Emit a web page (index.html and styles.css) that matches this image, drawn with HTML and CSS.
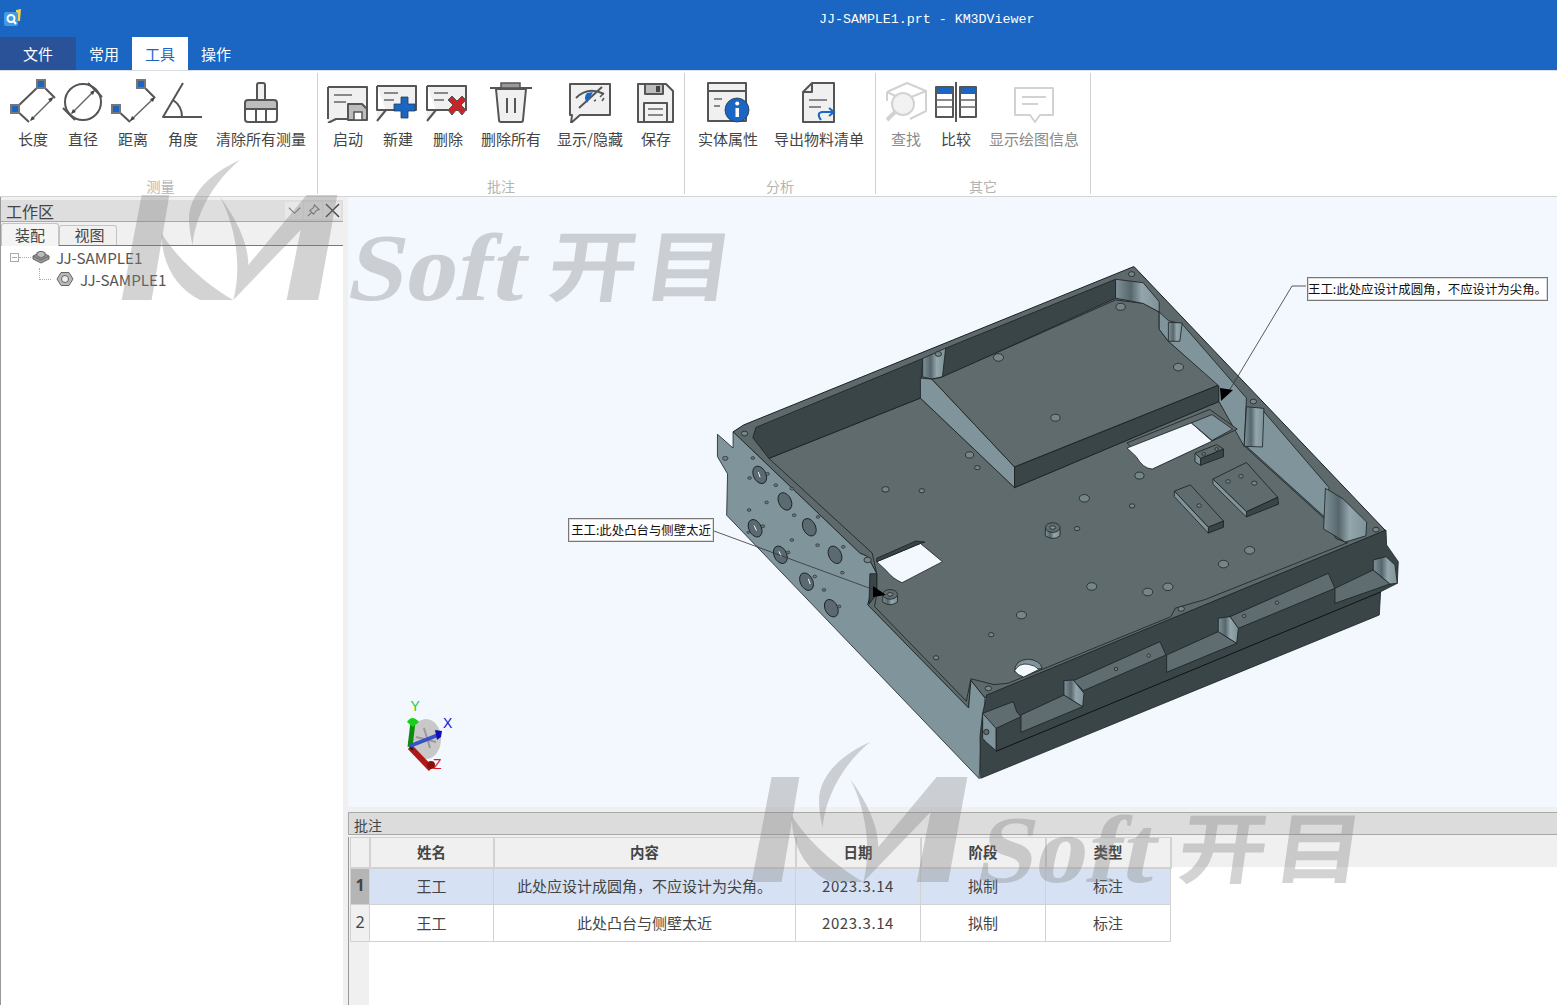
FILE: index.html
```html
<!DOCTYPE html>
<html lang="zh">
<head>
<meta charset="utf-8">
<title>JJ-SAMPLE1.prt - KM3DViewer</title>
<link rel="stylesheet" href="styles.css">
</head>
<body>
<header class="titlebar">
  <svg class="applogo" viewBox="0 0 18 18"><path d="M13 1 18 0 17 12 13 12Z" fill="#f2d24a"/><rect x="1" y="3" width="14" height="14" rx="2" fill="#3f9be8"/><circle cx="8" cy="9.500" r="3.500" fill="none" stroke="#fff" stroke-width="2"/><path d="M10.500 12 13 15" stroke="#fff" stroke-width="2"/></svg>
  <div class="title">JJ-SAMPLE1.prt - KM3DViewer</div>
</header>
<nav class="tabs">
  <div class="tab tab-file">文件</div>
  <div class="tab">常用</div>
  <div class="tab tab-active">工具</div>
  <div class="tab">操作</div>
</nav>
<section class="ribbon">
  <div class="group group-first">
    <div class="buttons">
      <div class="btn"><svg class="ic" viewBox="0 0 48 44"><path class="s" d="M32 5 6 30 20 43M32 5 46 19"/><path class="t" d="M22 41 44 19"/><path class="k" d="M44 18 39 20 42 23ZM21 42 26 40 23 37Z"/><rect class="sq" x="28" y="1" width="8" height="8"/><rect class="sq" x="2" y="26" width="8" height="8"/></svg><span>长度</span></div>
      <div class="btn"><svg class="ic" viewBox="0 0 48 44"><circle class="s" cx="24" cy="23" r="18"/><path class="s" d="M4 29 16 41M29 4 43 18"/><path class="t" d="M13 34 35 12"/><path class="k" d="M36 11 31 13 34 16ZM12 35 17 33 14 30Z"/></svg><span>直径</span></div>
      <div class="btn"><svg class="ic" viewBox="0 0 48 44"><path class="s" d="M32 5 46 19M7 30 21 43"/><path class="t" d="M21 42 46 18"/><path class="k" d="M46 18 41 20 44 23ZM21 42 26 40 23 37Z"/><rect class="sq" x="28" y="1" width="8" height="8"/><rect class="sq" x="3" y="26" width="8" height="8"/></svg><span>距离</span></div>
      <div class="btn"><svg class="ic" viewBox="0 0 48 44"><path class="s" d="M24 4 4 38H43M14 21C20 25 23 31 23 38"/></svg><span>角度</span></div>
      <div class="btn"><svg class="ic" viewBox="0 0 48 44"><path class="s f1" d="M20 21V6Q20 4 22 4H26Q28 4 28 6V21"/><path class="s f2" d="M8 24Q8 21 11 21H37Q40 21 40 24V30H8Z"/><path class="s" d="M8 30H40V40Q40 43 37 43H11Q8 43 8 40ZM19 30V43M29 30V43"/></svg><span>清除所有测量</span></div>
    </div>
    <div class="grouplabel">测量</div>
  </div>
  <div class="group">
    <div class="buttons">
      <div class="btn"><svg class="ic" viewBox="0 0 48 44"><path class="s f1" d="M4 8H43V40H12L4 44"/><path class="s" d="M4 8V40"/><path class="t" d="M10 16H28M10 23H22"/><path class="s f2" d="M24 25H38L43 30V41H24Z"/><rect class="sw" x="30" y="33" width="8" height="8"/></svg><span>启动</span></div>
      <div class="btn"><svg class="ic" viewBox="0 0 48 44"><path class="s f1" d="M3 7H42V31H12L3 42M3 7V31H12"/><path class="t" d="M10 14H24M10 21H20"/><path class="blue" d="M27 18H34V25H41V32H34V39H27V32H20V25H27Z"/></svg><span>新建</span></div>
      <div class="btn"><svg class="ic" viewBox="0 0 48 44"><path class="s f1" d="M3 7H42V31H12L3 42M3 7V31H12"/><path class="t" d="M10 14H24M10 21H20"/><path class="red" d="M24 21 28 17 33 22 38 17 42 21 37 26 42 31 38 36 33 30 28 36 24 31 29 26Z"/></svg><span>删除</span></div>
      <div class="btn"><svg class="ic" viewBox="0 0 48 44"><path class="s f1" d="M9 10H39L36 41Q36 43 34 43H14Q12 43 12 41Z"/><path class="s" d="M3 9H45"/><rect class="lid" x="14" y="4" width="19" height="5"/><path class="s" d="M20 19V34M28 19V34"/></svg><span>删除所有</span></div>
      <div class="btn"><svg class="ic" viewBox="0 0 48 44"><path class="s f1" d="M4 5H44V36H14L5 44 6 36H4Z"/><path class="s" d="M10 19Q22 7 38 15M13 29 36 8"/><path class="bl" d="M21 14 27 13 21 24Q17 18 21 14Z"/><path class="d" d="M28 22 30 21M34 18 37 15M38 19 36 22"/></svg><span>显示/隐藏</span></div>
      <div class="btn"><svg class="ic" viewBox="0 0 48 44"><path class="s f1" d="M6 5H34L41 12V43H6Z"/><path class="s f2" d="M13 5H31V15H13Z"/><rect class="k" x="24" y="7" width="4" height="6"/><path class="s fw" d="M12 24H35V43H12Z"/><path class="t" d="M16 30H31M16 36H31"/></svg><span>保存</span></div>
    </div>
    <div class="grouplabel">批注</div>
  </div>
  <div class="group">
    <div class="buttons">
      <div class="btn"><svg class="ic" viewBox="0 0 48 44"><path class="s f1" d="M4 4H42V42H4Z"/><path class="s" d="M4 12H42"/><path class="t" d="M10 20H18M10 27H16"/><circle class="blue" cx="33" cy="31" r="12"/><rect class="wf" x="31.500" y="29" width="3.500" height="9"/><circle class="wf" cx="33.200" cy="24.500" r="2"/></svg><span>实体属性</span></div>
      <div class="btn"><svg class="ic" viewBox="0 0 48 44"><path class="s f1" d="M17 4H39V43H8V13Z"/><path class="s" d="M17 4V13H8"/><path class="t" d="M14 21H32M14 28H26"/><path class="ar" d="M26 41Q21 34 27 33H38M34 29 39 33 34 37"/></svg><span>导出物料清单</span></div>
    </div>
    <div class="grouplabel">分析</div>
  </div>
  <div class="group group-last">
    <div class="buttons">
      <div class="btn off"><svg class="ic" viewBox="0 0 48 44"><path class="g" d="M5 13 25 4 44 12V32L28 40M5 13V22M5 13 22 21 44 12M22 21V24"/><circle class="g gw" cx="21" cy="25" r="11"/><path class="g gt" d="M13 33 5 41"/></svg><span>查找</span></div>
      <div class="btn"><svg class="ic" viewBox="0 0 48 44"><rect class="s" x="4" y="8" width="17" height="30"/><rect class="s" x="28" y="8" width="16" height="30"/><rect class="bf" x="5" y="9" width="15" height="6"/><rect class="bf" x="29" y="9" width="14" height="6"/><path class="t" d="M4 21H21M4 28H21M28 21H44M28 28H44"/><path class="s" d="M24 3V43"/></svg><span>比较</span></div>
      <div class="btn off"><svg class="ic" viewBox="0 0 48 44"><path class="g" d="M5 9H43V36H30L25 43 20 36H5Z"/><path class="g" d="M12 18H36M12 25H28"/></svg><span>显示绘图信息</span></div>
    </div>
    <div class="grouplabel">其它</div>
  </div>
</section>
<main class="main">
  <aside class="left">
    <div class="panelhead">
      <span class="panelname">工作区</span>
      <div class="panelbtns">
        <span class="pbtn"><svg viewBox="0 0 16 16"><path d="M2 5 8 11 14 5"/></svg></span>
        <span class="pbtn"><svg viewBox="0 0 16 16"><path d="M9 2 14 7 11 8 8 12 4 8 8 5ZM6 10 2 14"/></svg></span>
        <span class="pbtn"><svg viewBox="0 0 16 16"><path class="x" d="M1 1 15 15M15 1 1 15"/></svg></span>
      </div>
    </div>
    <div class="lefttabs">
      <div class="ltab ltab-on">装配</div>
      <div class="ltab ltab-off">视图</div>
    </div>
    <div class="tree">
      <div class="node">
        <span class="minus"></span><span class="dots-h"></span>
        <svg class="nodeicon" viewBox="0 0 18 16"><path d="M1 7 9 3 17 7V10L9 14 1 10Z" fill="#9a9a9a" stroke="#666"/><path d="M1 7 9 11 17 7" fill="none" stroke="#666"/><path d="M5 3.500Q9 1 13 3.500V7L9 9 5 7Z" fill="#bbb" stroke="#666"/></svg>
        <span>JJ-SAMPLE1</span>
      </div>
      <div class="node node-child">
        <span class="dots-l"></span>
        <svg class="nodeicon" viewBox="0 0 18 16"><path d="M5 1.500H13L17 8 13 14.500H5L1 8Z" fill="#b8b8b8" stroke="#666"/><circle cx="9" cy="8" r="3.500" fill="#eee" stroke="#666"/></svg>
        <span>JJ-SAMPLE1</span>
      </div>
    </div>
  </aside>
  <div class="right">
    <div class="viewport">
      <svg class="cad" viewBox="348 197 1209 610">
        <defs>
          <linearGradient id="col" x1="0" x2="1" y1="0" y2="0">
            <stop offset="0" stop-color="#7e9299"/><stop offset=".35" stop-color="#56676c"/><stop offset=".6" stop-color="#93a6ac"/><stop offset="1" stop-color="#7e9299"/>
          </linearGradient>
        </defs>
        <g transform="translate(700 250) scale(.4592 .3444)">
          <path class="rim" d="M72 528 95 508 945 48 1493 815 620 1300 590 1250 585 1330 365 1030 385 940 365 890 348 880Z"/>
          <path class="lt" d="M38 535 72 575 72 528 348 880 365 890 385 940 365 1030 585 1330 590 1250 620 1300 622 1340 640 1380 645 1455 612 1415 608 1535 58 770 60 650 38 600Z"/>
          <path class="fl" d="M150 605 480 430 685 690 1130 440 1190 575 1360 780 1385 838 1410 850 1100 1015 1060 1030 1035 1040 1025 1065 671 1258 640 1262 590 1245 580 1310 380 1035 385 1000 385 940 375 880Z"/>
          <path class="dk" d="M115 545 122 515 485 315 480 430 150 605Z"/>
          <path class="dk" d="M535 285 905 85 905 140 520 375Z"/>
          <path class="dk" d="M370 940 385 940 385 1000 368 1028Z"/>
          <path class="cl" d="M485 315 535 285 528 368 505 375 485 368Z"/>
          <path class="lt" d="M480 372 505 375 685 630 685 690 480 430Z"/>
          <path class="fl" d="M505 375 525 370 905 145 965 155 1000 180 1000 230 1020 265 1130 392 685 630Z"/>
          <path class="dk" d="M685 630 1130 392 1130 440 685 690Z"/>
          <path class="lt" d="M1000 180 1000 230 1020 265 1130 395 1130 440 1185 570 1190 430 1050 215 1020 205Z"/>
          <path class="lt" d="M1225 465 1370 690 1360 775 1190 570Z"/>
          <path class="cl" d="M905 85 965 95 1000 150 1000 180 965 155 905 140Z"/>
          <path class="cl" d="M1020 210 1050 212 1045 265 1020 265Z"/>
          <path class="cl" d="M1190 455 1228 460 1225 572 1185 570Z"/>
          <path class="cl" d="M1362 692 1400 722 1452 790 1450 830 1405 848 1358 810Z"/>
          <path class="fl" d="M930 560 1110 463 1170 520 1115 555 985 635Z"/>
          <path class="wh" d="M930 575 1070 502 1115 555 985 636Q965 635 950 600Z"/>
          <path class="lt" d="M1070 502 1115 478 1160 520 1115 553Z"/>
          <path class="wh" d="M385 905 480 852 528 905 440 966Q420 955 405 930Z"/>
          <path class="dk" d="M385 895 470 845 490 848 480 852 385 905Z"/>
          <path class="lt" d="M685 1225Q685 1190 715 1188Q742 1192 745 1215Z"/>
          <path class="wh" d="M685 1222Q695 1198 715 1203Q730 1206 738 1218L705 1240Q692 1235 685 1222Z"/>
          <path class="fl" d="M1117 665 1190 617 1258 718 1190 760Z"/>
          <path class="dk" d="M1190 760 1258 718 1260 738 1190 775Z"/>
          <path class="lt" d="M1117 665 1190 760 1190 775 1117 680Z"/>
          <path class="fl" d="M1033 700 1068 682 1140 787 1107 805Z"/>
          <path class="dk" d="M1107 805 1140 787 1140 805 1107 822Z"/>
          <path class="lt" d="M1033 700 1107 805 1107 822 1033 716Z"/>
          <path class="dk" d="M1090 605 1140 578 1140 600 1090 625Z"/>
          <path class="fl" d="M1078 590 1125 565 1140 578 1090 605Z"/>
          <path class="lt" d="M1078 590 1090 605 1090 625 1078 615Z"/>
          <g class="holes">
            <circle cx="650" cy="312" r="11"/><circle cx="1042" cy="340" r="11"/><circle cx="774" cy="487" r="10"/><circle cx="587" cy="595" r="9"/><circle cx="604" cy="632" r="6"/><circle cx="404" cy="695" r="8"/><circle cx="483" cy="699" r="6"/><circle cx="957" cy="655" r="10"/><circle cx="837" cy="721" r="11"/><circle cx="941" cy="743" r="6"/><circle cx="821" cy="809" r="6"/><circle cx="853" cy="977" r="11"/><circle cx="975" cy="993" r="11"/><circle cx="1019" cy="978" r="11"/><circle cx="700" cy="1060" r="11"/><circle cx="634" cy="1117" r="6"/><circle cx="514" cy="1184" r="6"/><circle cx="1197" cy="872" r="11"/><circle cx="1140" cy="912" r="11"/><circle cx="916" cy="165" r="10"/>
            <circle cx="97" cy="533" r="7"/><circle cx="519" cy="302" r="7"/><circle cx="940" cy="70" r="7"/><circle cx="1205" cy="440" r="7"/><circle cx="1472" cy="812" r="7"/><circle cx="365" cy="900" r="8"/><circle cx="628" cy="1273" r="7"/><circle cx="1048" cy="1042" r="7"/>
            <circle cx="1150" cy="672" r="5"/><circle cx="1178" cy="657" r="5"/><circle cx="1207" cy="677" r="6"/><circle cx="1087" cy="742" r="5"/><circle cx="1097" cy="592" r="4"/><circle cx="1125" cy="578" r="4"/>
          </g>
          <path class="cl" d="M752 810H784V830Q770 845 752 830Z"/>
          <ellipse class="bosstop" cx="768" cy="806" rx="16" ry="14"/><ellipse class="bossin" cx="768" cy="806" rx="6" ry="5"/>
          <path class="cl" d="M398 1005H430V1022Q414 1038 398 1022Z"/>
          <ellipse class="bosstop" cx="414" cy="1000" rx="16" ry="14"/><ellipse class="bossin" cx="414" cy="1000" rx="6" ry="5"/>
          <g class="bores">
            <ellipse cx="130" cy="653" rx="14" ry="26" transform="rotate(-15 130 653)"/><ellipse cx="185" cy="730" rx="14" ry="26" transform="rotate(-15 185 730)"/><ellipse cx="238" cy="805" rx="14" ry="26" transform="rotate(-15 238 805)"/><ellipse cx="294" cy="885" rx="14" ry="26" transform="rotate(-15 294 885)"/><ellipse cx="120" cy="808" rx="14" ry="26" transform="rotate(-15 120 808)"/><ellipse cx="175" cy="885" rx="14" ry="26" transform="rotate(-15 175 885)"/><ellipse cx="232" cy="963" rx="14" ry="26" transform="rotate(-15 232 963)"/><ellipse cx="286" cy="1040" rx="14" ry="26" transform="rotate(-15 286 1040)"/>
          </g>
          <g class="slits"><path d="M127 645 131 660M172 875 177 890M236 955 240 970M118 800 123 815"/></g>
          <g class="pins">
            <circle cx="115" cy="604" r="4"/><circle cx="108" cy="662" r="4"/><circle cx="147" cy="650" r="4"/><circle cx="165" cy="683" r="4"/><circle cx="200" cy="693" r="4"/><circle cx="145" cy="733" r="4"/><circle cx="205" cy="770" r="4"/><circle cx="257" cy="775" r="4"/><circle cx="200" cy="842" r="4"/><circle cx="256" cy="857" r="4"/><circle cx="312" cy="862" r="4"/><circle cx="107" cy="755" r="4"/><circle cx="137" cy="802" r="4"/><circle cx="192" cy="878" r="4"/><circle cx="250" cy="948" r="4"/><circle cx="270" cy="987" r="4"/><circle cx="310" cy="937" r="4"/><circle cx="303" cy="1035" r="4"/><circle cx="105" cy="820" r="3"/><circle cx="55" cy="605" r="6"/>
          </g>
        </g>
        <g transform="translate(960 560) scale(.3333)">
          <path class="dk" d="M80 405 1278 -90 1280 -45 1315 5 1312 70 1262 95 1258 165 62 655 60 530 68 460Z"/>
          <path class="edge" d="M108 574 1262 96"/>
          <path class="fl2" d="M68 460 160 425 170 455 183 470 108 505 108 572 68 535Z"/>
          <path class="fl2" d="M183 465 312 405 368 440 183 517Z"/>
          <path class="fl2" d="M340 362 600 245 618 285 370 392Z"/>
          <path class="cl" d="M312 362 340 360 372 400 368 440 312 405Z"/>
          <path class="fl2" d="M620 285 775 215 830 250 620 337Z"/>
          <path class="fl2" d="M810 170 1105 40 1125 85 835 205Z"/>
          <path class="cl" d="M775 175 810 170 835 205 830 250 775 215Z"/>
          <path class="fl2" d="M1125 85 1240 30 1290 72 1125 130Z"/>
          <path class="cl" d="M1240 0 1278 -10 1305 15 1312 70 1290 72 1240 30Z"/>
          <g class="holes"><circle cx="468" cy="327" r="5"/><circle cx="566" cy="287" r="5"/><circle cx="853" cy="168" r="5"/><circle cx="951" cy="128" r="5"/></g>
          <path class="lt" d="M68 460 108 505 108 572 80 548 68 535Z"/>
          <circle class="hollt" cx="79" cy="516" r="8"/>
        </g>
        <path class="leader" d="M1306 286H1292L1226 396"/>
        <path class="arrow" d="M1233 390 1220 388 1221 401Z"/>
        <path class="leader" d="M714 531 880 592"/>
        <path class="arrow" d="M886 595 873 586 873 597Z"/>
        <g class="triad">
          <ellipse cx="426" cy="739" rx="15" ry="20" fill="#c8c8c8"/>
          <path d="M424 728 430 748M416 737 436 742" stroke="#9a9a9a" stroke-width="2"/>
          <path d="M410 747 413 722" stroke="#0b8c0b" stroke-width="5"/>
          <path d="M407 722Q412 714 419 722L413 727Z" fill="#18d018"/>
          <path d="M410 747 431 769" stroke="#b01818" stroke-width="6"/>
          <circle cx="431" cy="765" r="4" fill="#8a1010"/>
          <path d="M410 746 438 735" stroke="#3a50c8" stroke-width="4"/>
          <path d="M435 730 442 731 441 737 437 740Z" fill="#1010b0"/>
          <path d="M410 747 413 750" stroke="#222" stroke-width="2"/>
        </g>
        <text class="ax axy" x="410.500" y="711">Y</text>
        <text class="ax axx" x="443" y="728">X</text>
        <text class="ax axz" x="433" y="769">Z</text>
      </svg>
      <div class="note note-a">王工:此处应设计成圆角，不应设计为尖角。</div>
      <div class="note note-b">王工:此处凸台与侧壁太近</div>
    </div>
    <div class="notepanel">
      <div class="notehead">批注</div>
      <div class="gridwrap">
        <table class="grid">
          <colgroup><col class="c0"><col class="c1"><col class="c2"><col class="c3"><col class="c4"><col class="c5"></colgroup>
          <thead><tr><th></th><th>姓名</th><th>内容</th><th>日期</th><th>阶段</th><th>类型</th></tr></thead>
          <tbody>
            <tr class="sel"><th class="rowh">1</th><td>王工</td><td>此处应设计成圆角，不应设计为尖角。</td><td class="date">2023.3.14</td><td>拟制</td><td>标注</td></tr>
            <tr><th class="rowh">2</th><td>王工</td><td>此处凸台与侧壁太近</td><td class="date">2023.3.14</td><td>拟制</td><td>标注</td></tr>
          </tbody>
        </table>
      </div>
    </div>
  </div>
</main>
<svg class="watermark" viewBox="0 0 1557 1005">
  <g>
    <g transform="translate(110 155) scale(.3333)">
      <path d="M95 120H178L125 435H35Z"/>
      <path d="M390 15C300 55 235 120 237 195 238 225 243 250 248 270 255 190 300 90 390 15Z"/>
      <path d="M155 235C200 310 290 390 370 435H270C200 400 155 330 155 235Z"/>
      <path d="M330 125C385 200 415 270 415 330L590 120H682L625 435H530L572 225 370 435C395 340 380 220 330 125Z"/>
    </g>
    <text class="wmsoft" transform="translate(344 300) skewX(-12)" textLength="178" lengthAdjust="spacingAndGlyphs">Soft</text>
    <text class="wmcn" transform="translate(545 295) skewX(-8) scale(1.06 .92)">开目</text>
  </g>
  <g transform="translate(630 582)">
    <g transform="translate(110 155) scale(.3333)">
      <path d="M95 120H178L125 435H35Z"/>
      <path d="M390 15C300 55 235 120 237 195 238 225 243 250 248 270 255 190 300 90 390 15Z"/>
      <path d="M155 235C200 310 290 390 370 435H270C200 400 155 330 155 235Z"/>
      <path d="M330 125C385 200 415 270 415 330L590 120H682L625 435H530L572 225 370 435C395 340 380 220 330 125Z"/>
    </g>
    <text class="wmsoft" transform="translate(344 300) skewX(-12)" textLength="178" lengthAdjust="spacingAndGlyphs">Soft</text>
    <text class="wmcn" transform="translate(545 295) skewX(-8) scale(1.06 .92)">开目</text>
  </g>
</svg>
</body>
</html>
```
FILE: styles.css
```css
* { box-sizing: border-box; }
html, body { margin: 0; height: 100%; }
body {
  width: 1557px; height: 1005px; overflow: hidden; position: relative;
  display: flex; flex-direction: column;
  background: #f0f0f0; color: #333;
  font-family: "Noto Sans CJK SC", "Noto Sans", sans-serif; font-size: 15px;
}
.titlebar { height: 37px; background: #1a66c2; display: flex; align-items: center; position: relative; flex: none; }
.applogo { width: 18px; height: 18px; margin: -2px 0 0 3px; }
.title {
  position: absolute; left: 819px; top: 12px;
  font: 13.300px/16px "Liberation Mono", monospace; color: #fff; white-space: pre;
}
.tabs { height: 33px; background: #1a66c2; display: flex; flex: none; }
.tab { width: 56px; text-align: center; line-height: 33px; color: #fff; font-size: 15px; }
.tab-file { width: 76px; background: #2a5299; }
.tab-active { background: #fff; color: #1a66c2; }
.ribbon { height: 127px; flex: none; background: #fff; display: flex; border-bottom: 1px solid #d4d4d4; border-top: 1px solid #d8dde4; padding-top: 2px; }
.group { height: 121px; padding: 0 3px 0 5px; border-right: 1px solid #d0d0d0; display: flex; flex-direction: column; position: relative; }
.group-first { padding-left: 8px; }
.group-first .grouplabel { left: 4px; }
.buttons { display: flex; padding-top: 6px; }
.btn { min-width: 50px; padding: 0 8px; display: flex; flex-direction: column; align-items: center; font-size: 15px; line-height: 20px; color: #444; white-space: nowrap; }
.btn.off { color: #8a8a8a; }
.ic { width: 48px; height: 44px; display: block; margin: 0 -7px 6px; flex: none; }
.grouplabel { position: absolute; left: 0; right: 0; top: 103px; text-align: center; color: #b4b4b4; font-size: 14px; line-height: 20px; }
.s { fill: none; stroke: #555; stroke-width: 2; stroke-linejoin: round; }
.t { fill: none; stroke: #666; stroke-width: 1.500; }
.k { fill: #444; stroke: none; }
.sq { fill: #1a66c2; stroke: #777; stroke-width: 2; }
.f1 { fill: #f0f0f0; }
.f2 { fill: #bdbdbd; }
.fw { fill: #f2f2f2; }
.sw { fill: #fff; stroke: #555; stroke-width: 1.500; }
.blue { fill: #1a66c2; stroke: #2a3a50; stroke-width: .8; }
.red { fill: #c8252b; stroke: #555; stroke-width: 1; }
.lid { fill: #999; stroke: #555; stroke-width: 1.500; }
.bl { fill: #1a66c2; }
.d { fill: none; stroke: #555; stroke-width: 1.500; }
.wf { fill: #fff; }
.ar { fill: none; stroke: #1a66c2; stroke-width: 2; }
.g { fill: none; stroke: #d2d2d2; stroke-width: 2; stroke-linejoin: round; }
.gw { fill: #f2f2f2; }
.gt { stroke-width: 4; }
.bf { fill: #1a66c2; }

.main { flex: 1; display: flex; min-height: 0; }
.left { width: 348px; flex: none; padding: 3px 5px 0 0; border-left: 1px solid #999; display: flex; flex-direction: column; background: #f0f0f0; }
.panelhead { height: 22px; flex: none; background: #dedede; border-bottom: 1px solid #a8a8a8; display: flex; justify-content: space-between; align-items: flex-end; padding-left: 5px; }
.panelname { font-size: 16px; line-height: 19px; color: #444; }
.panelbtns { display: flex; gap: 1px; align-self: center; margin-right: 2px; }
.pbtn { width: 18px; height: 17px; background: #e8e8e8; display: flex; align-items: center; justify-content: center; }
.pbtn svg { width: 15px; height: 15px; fill: none; stroke: #777; stroke-width: 1.200; }
.pbtn .x { stroke: #444; stroke-width: 1.500; }
.lefttabs { height: 24px; flex: none; display: flex; align-items: flex-end; padding-left: 0; border-bottom: 1px solid #777; background: #f0f0f0; }
.ltab { width: 58px; height: 20px; border: 1px solid #c4c4c4; border-bottom: 0; border-radius: 3px 3px 0 0; text-align: center; font-size: 15px; line-height: 18px; color: #444; }
.ltab-on { height: 23px; background: #f4f4f4; margin-bottom: -1px; line-height: 21px; }
.ltab-off { padding-left: 3px; }
.tree { flex: 1; background: #fff; font-size: 15.200px; color: #555; }
.node { height: 22px; display: flex; align-items: center; position: relative; }
.minus { width: 9px; height: 9px; margin-left: 9px; border: 1px solid #aaa; background: linear-gradient(#aaa, #aaa) center / 5px 1px no-repeat; flex: none; }
.dots-h { width: 12px; margin-right: 1px; border-top: 1px dotted #aaa; flex: none; }
.dots-l { width: 12px; height: 12px; margin: -10px 5px 0 38px; border-left: 1px dotted #aaa; border-bottom: 1px dotted #aaa; flex: none; }
.nodeicon { width: 18px; height: 16px; margin: 0 6px 0 0; flex: none; }

.right { flex: 1; display: flex; flex-direction: column; min-width: 0; }
.viewport { height: 610px; flex: none; position: relative; background: #f3f7fe; }
.cad { display: block; width: 1209px; height: 610px; }
.rim { fill: #5d696b; stroke: #1a2022; stroke-width: 1; vector-effect: non-scaling-stroke; }
.lt { fill: #80949b; stroke: #1a2022; stroke-width: .8; vector-effect: non-scaling-stroke; }
.fl { fill: #5f6b6c; stroke: #1a2022; stroke-width: .8; vector-effect: non-scaling-stroke; }
.fl2 { fill: #5f6d70; stroke: #1a2022; stroke-width: .8; vector-effect: non-scaling-stroke; }
.dk { fill: #3a4548; stroke: #1a2022; stroke-width: .8; vector-effect: non-scaling-stroke; }
.cl { fill: url(#col); stroke: #1a2022; stroke-width: .8; vector-effect: non-scaling-stroke; }
.wh { fill: #f3f7fe; stroke: #1a2022; stroke-width: .8; vector-effect: non-scaling-stroke; }
.edge { fill: none; stroke: #111; stroke-width: 1; vector-effect: non-scaling-stroke; }
.holes circle { fill: #75868b; stroke: #1d2426; stroke-width: .8; vector-effect: non-scaling-stroke; }
.hollt { fill: #5f6b6c; stroke: #1d2426; stroke-width: .8; vector-effect: non-scaling-stroke; }
.bosstop { fill: #5f6b6c; stroke: #1d2426; stroke-width: .8; vector-effect: non-scaling-stroke; }
.bossin { fill: #82939a; stroke: #1d2426; stroke-width: .8; vector-effect: non-scaling-stroke; }
.bores ellipse { fill: #5a6a70; stroke: #1d2426; stroke-width: 1; vector-effect: non-scaling-stroke; }
.slits path { fill: none; stroke: #f3f7fe; stroke-width: 1; vector-effect: non-scaling-stroke; }
.pins circle { fill: #6a7a80; stroke: #2a3134; stroke-width: .7; vector-effect: non-scaling-stroke; }
.leader { fill: none; stroke: #333; stroke-width: .8; }
.arrow { fill: #000; }
.ax { font: 14px "Liberation Sans", sans-serif; }
.axy { fill: #1fd01f; }
.axx { fill: #1414d8; }
.axz { fill: #e01818; }
.note { position: absolute; background: #fff; border: 1px solid #777; box-shadow: inset 0 0 0 1px #ddd; height: 24px; font-size: 12.400px; line-height: 22px; color: #111; text-align: center; white-space: nowrap; }
.note-a { left: 959px; top: 80px; width: 241px; }
.note-b { left: 220px; top: 321px; width: 146px; }

.notepanel { flex: 1; margin-top: 5px; min-height: 0; display: flex; flex-direction: column; }
.notehead { height: 23px; flex: none; background: #dcdcdc; border: 1px solid #a8a8a8; border-width: 1px 0 1px 1px; font-size: 14px; line-height: 24px; padding-left: 5px; color: #444; }
.gridwrap { flex: 1; margin-top: 2px; padding-left: 1px; border-left: 1px solid #999; background: linear-gradient(#f0f0f0, #f0f0f0) 0 0 / 100% 30px no-repeat, linear-gradient(#f0f0f0, #f0f0f0) 0 0 / 20px 100% no-repeat, #fff; }
.grid { border-collapse: collapse; table-layout: fixed; width: 821px; font-size: 15px; color: #444; }
.c0 { width: 19px; } .c1 { width: 124px; } .c2 { width: 302px; } .c3 { width: 125px; } .c4 { width: 125px; } .c5 { width: 125px; }
.grid th, .grid td { border: 1px solid #d2d2d2; text-align: center; padding: 0 0 2px; }
.grid thead th { height: 30px; background: #f0f0f0; font-weight: 700; font-size: 14.500px; border-width: 1px 2px 2px 1px; }
.grid td { height: 37px; background: #fff; }
.grid .date { letter-spacing: .6px; }
.grid .rowh { background: #f0f0f0; font-weight: 400; font-size: 16px; font-family: "Noto Sans", sans-serif; }
.sel td { background: #d6e2f3; }
.sel .rowh { background: #b5b5b5; font-weight: 700; }

.watermark { position: absolute; left: 0; top: 0; width: 1557px; height: 1005px; pointer-events: none; fill: rgba(130, 130, 130, .35); }
.wmsoft { font: 700 96px "Liberation Serif", serif; }
.wmcn { font: 700 84px "Noto Sans CJK SC", sans-serif; letter-spacing: 6px; }
```
